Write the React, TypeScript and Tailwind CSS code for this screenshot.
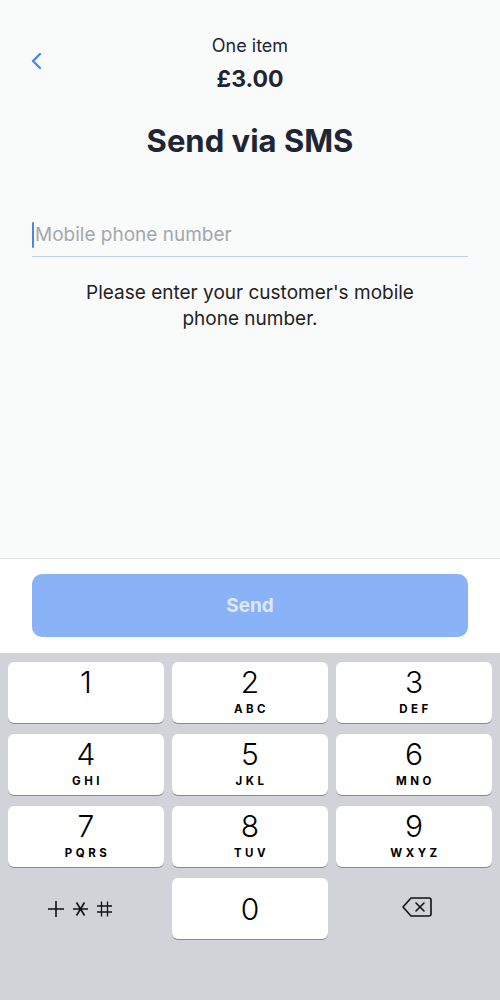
import React from "react";

const keys = [
  { n: "1", l: "" },
  { n: "2", l: "ABC" },
  { n: "3", l: "DEF" },
  { n: "4", l: "GHI" },
  { n: "5", l: "JKL" },
  { n: "6", l: "MNO" },
  { n: "7", l: "PQRS" },
  { n: "8", l: "TUV" },
  { n: "9", l: "WXYZ" },
];

function Key({ n, l }: { n: string; l: string }) {
  return (
    <div className="flex h-[61px] flex-col items-center rounded-[6px] bg-white shadow-[0_1px_0_#898a8d]">
      <span className="mt-[1px] text-[30px] font-light leading-[38px] text-black">{n}</span>
      {l && (
        <span className="mt-[1px] pl-[3px] text-[11.5px] font-bold leading-[14px] tracking-[3.5px] text-black">{l}</span>
      )}
    </div>
  );
}

export default function App() {
  return (
    <div className="flex h-[1000px] w-[500px] flex-col bg-[#f9fafa] font-['Inter',sans-serif] text-[#1f2633]">
      <div className="relative flex h-[558px] flex-col items-center">
        <button className="absolute left-[28px] top-[50px] text-[#4a86e8]">
          <svg width="18" height="22" viewBox="0 0 18 22" fill="none">
            <path d="M12 4 L5 11 L12 18" stroke="currentColor" strokeWidth="2.4" strokeLinecap="round" strokeLinejoin="round" />
          </svg>
        </button>
        <div className="mt-[34px] text-[18px] leading-[24px]">One item</div>
        <div className="mt-[6px] text-[23px] font-bold leading-[30px]">£3.00</div>
        <h1 className="mt-[28px] text-[31px] font-bold leading-[38px]">Send via SMS</h1>
        <div className="mt-[57px] w-[436px]">
          <div className="flex h-[36px] items-center">
            <span className="h-[26px] w-[2px] rounded bg-[#4a86e8]" />
            <span className="ml-[1px] text-[19px] text-[#a2a8b0]">Mobile phone number</span>
          </div>
          <div className="mt-[3px] h-px bg-[#bcd1f5]" />
        </div>
        <p className="mt-[23px] w-[380px] text-center text-[19px] leading-[26px] text-[#222]">
          Please enter your customer's mobile phone number.
        </p>
      </div>
      <div className="border-t border-[#dfe1e3] bg-white px-[32px] pb-[16px] pt-[15px]">
        <button className="flex h-[63px] w-full items-center justify-center rounded-[10px] bg-[#8ab3f7] pt-[2px] text-[19px] font-bold text-[#dce8fd]">
          Send
        </button>
      </div>
      <div className="flex-1 bg-[#d1d3d9] px-[8px] pt-[9px]">
        <div className="grid grid-cols-3 gap-x-[8px] gap-y-[11px]">
          {keys.map((k) => (
            <Key key={k.n} n={k.n} l={k.l} />
          ))}
          <div className="flex h-[61px] items-center justify-center pr-[10px]">
            <svg width="70" height="22" viewBox="0 0 70 22" fill="none" stroke="#111" strokeWidth="1.6">
              <path d="M2 11 H18 M10 3 V19" />
              <path d="M27 11 H42 M30.5 4.5 L38.5 17.5 M38.5 4.5 L30.5 17.5" />
              <path d="M51 8 H66 M51 14 H66 M55.5 3.5 V18.5 M61.5 3.5 V18.5" strokeWidth="1.3" />
            </svg>
          </div>
          <div className="flex h-[61px] items-center justify-center rounded-[6px] bg-white shadow-[0_1px_0_#898a8d]">
            <span className="text-[30px] font-light leading-[38px] text-black">0</span>
          </div>
          <div className="flex h-[61px] items-center justify-center pb-[4px] pl-[6px]">
            <svg width="32" height="24" viewBox="0 0 32 24" fill="none" stroke="#111" strokeWidth="1.6" strokeLinejoin="round">
              <path d="M10 3 H28 Q30 3 30 5 V19 Q30 21 28 21 H10 L2 12 Z" />
              <path d="M15 8 L23 16 M23 8 L15 16" strokeLinecap="round" />
            </svg>
          </div>
        </div>
      </div>
    </div>
  );
}
